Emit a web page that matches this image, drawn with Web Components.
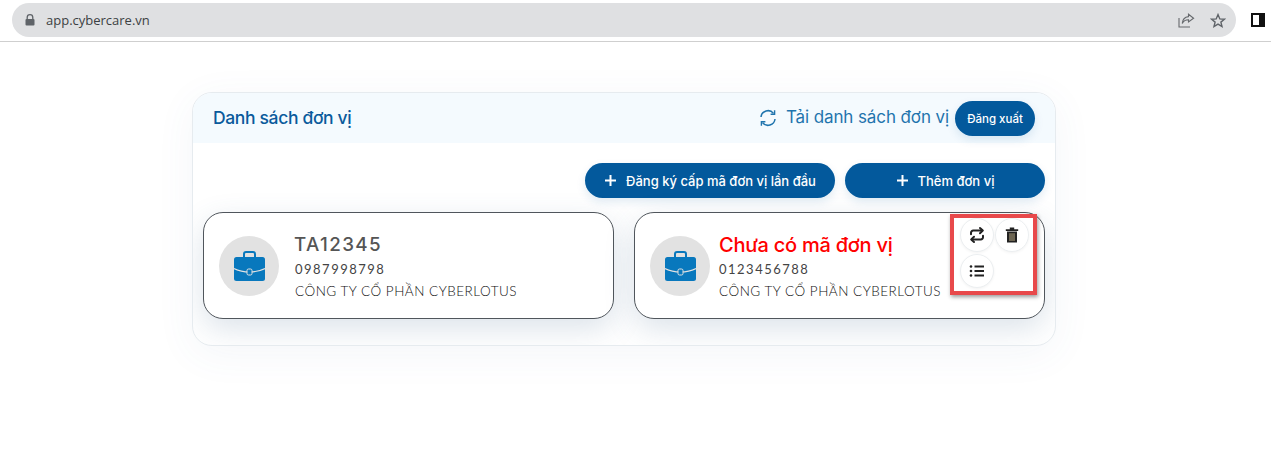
<!DOCTYPE html>
<html>
<head>
<meta charset="utf-8">
<title>Danh sách đơn vị</title>
<style>
  html, body { margin: 0; padding: 0; background: #fff; }
  body { font-family: "Inter", "Noto Sans", sans-serif; height: 472px; overflow: hidden; }
</style>
</head>
<body>
<browser-bar url="app.cybercare.vn"></browser-bar>
<unit-panel title="Danh sách đơn vị">
  <unit-card code="TA12345" phone="0987998798" company="CÔNG TY CỔ PHẦN CYBERLOTUS"></unit-card>
  <unit-card code="Chưa có mã đơn vị" phone="0123456788" company="CÔNG TY CỔ PHẦN CYBERLOTUS" missing actions></unit-card>
</unit-panel>

<script>
// browser chrome on top
class BrowserBar extends HTMLElement {
  constructor(){
    super();
    this.attachShadow({mode:"open"});
    this.shadowRoot.innerHTML = `
    <style>
      :host { display: flex; align-items: flex-start; height: 38px; padding: 3px 12px 0; border-bottom: 1px solid #cfcfcf; background: #fff; }
      .omni { flex: none; width: 1224px; height: 34px; background: #dfe0e2; border-radius: 17px; display: flex; align-items: center; padding: 0 0 0 13px; box-sizing: border-box; }
      .url { font: 400 13px "Open Sans", sans-serif; color: #3c4043; margin-left: 11px; flex: 1; }
      .omni svg { flex: none; display: block; }
      .share { margin-right: 15px; }
      .star { margin-right: 10px; }
      .side { flex: none; margin: 10px 0 0 15px; }
    </style>
    <div class="omni">
      <svg width="10" height="12" viewBox="0 0 10 12"><path d="M2.2 5V3.5a2.8 2.8 0 0 1 5.6 0V5" fill="none" stroke="#5f6368" stroke-width="1.3"/><rect x=".5" y="5" width="9" height="6.6" rx="1" fill="#5f6368"/></svg>
      <span class="url">${this.getAttribute("url")}</span>
      <svg class="share" width="17" height="15" viewBox="0 0 17 15" fill="none" stroke="#66696d" stroke-width="1.1"><path d="M1 5v9h11"/><path d="M10.5 1.2 15.6 5.2 10.5 9V6.8C7.5 6.8 5.5 8 4.2 10.6 4.5 6.8 6.8 4 10.5 3.6Z"/></svg>
      <svg class="star" width="16" height="15" viewBox="0 0 16 15" fill="none" stroke="#5f6368" stroke-width="1.4"><path d="M8 1.6 9.8 5.9 14.4 6.2 10.9 9.1 12 13.5 8 11.1 4 13.5 5.1 9.1 1.6 6.2 6.2 5.9Z"/></svg>
    </div>
    <svg class="side" width="14" height="14" viewBox="0 0 14 14"><rect x="1" y="1" width="12" height="12" fill="#fff" stroke="#111" stroke-width="2"/><rect x="8" y="1" width="5" height="12" fill="#111"/></svg>`;
  }
}

// pill button, with an optional plus
class PillButton extends HTMLElement {
  constructor(){
    super();
    this.attachShadow({mode:"open"});
    this.shadowRoot.innerHTML = `
    <style>
      :host { display: inline-flex; align-items: center; justify-content: center; gap: 10px; background: #03599c; color: #fff; border-radius: 18px; height: 35px; font: 500 13px "Inter", sans-serif; box-shadow: 0 4px 10px rgba(3,89,156,.12); box-sizing: border-box; }
      svg { display: block; margin-left: 1px; }
    </style>
    ${this.hasAttribute("plus") ? `<svg width="11" height="11" viewBox="0 0 11 11"><path d="M5.5 0v11M0 5.5h11" stroke="#fff" stroke-width="2"/></svg>` : ""}
    <slot></slot>`;
  }
}

class UnitPanel extends HTMLElement {
  constructor(){
    super();
    this.attachShadow({mode:"open"});
    this.shadowRoot.innerHTML = `
    <style>
      :host { display: block; width: 864px; height: 254px; margin: 50px 0 0 192px; box-sizing: border-box; border: 1px solid #e6ebef; border-radius: 20px; background: #fff; overflow: hidden; box-shadow: 0 8px 40px rgba(60,110,150,.06); }
      header { height: 50px; background: #f4fafe; display: flex; align-items: center; padding: 0 20px; }
      h1 { flex: 1; margin: 0; font: 500 17.5px "Inter", sans-serif; letter-spacing: -.35px; color: #0a5a9c; padding-bottom: 1px; }
      .reload { display: flex; align-items: center; gap: 9px; font: 400 17px "Inter", sans-serif; letter-spacing: -.1px; color: #1f74ad; padding-bottom: 2px; }
      .reload svg { display: block; margin-top: 1px; }
      .logout { width: 80px; height: 35px; margin-left: 6px; font-size: 11.5px; padding-top: 1px; }
      .actions { display: flex; justify-content: flex-end; gap: 10px; padding: 20px 10px 14px; }
      .first { width: 250px; }
      .add { width: 200px; }
      .grid { display: grid; grid-template-columns: 411px 411px; column-gap: 20px; padding: 0 10px; }
    </style>
    <header>
      <h1>${this.getAttribute("title")}</h1>
      <div class="reload">
        <svg width="18" height="18" viewBox="0 0 18 18" fill="none" stroke="#1f74ad" stroke-width="1.5"><path d="M2 8A7 7 0 0 1 14.5 4.4"/><path d="M16 10A7 7 0 0 1 3.5 13.6"/><path d="M15.6 1.2v4h-4" stroke-width="1.4"/><path d="M2.4 16.8v-4h4" stroke-width="1.4"/></svg>
        Tải danh sách đơn vị
      </div>
      <pill-button class="logout">Đăng xuất</pill-button>
    </header>
    <div class="actions">
      <pill-button class="first" plus>Đăng ký cấp mã đơn vị lần đầu</pill-button>
      <pill-button class="add" plus>Thêm đơn vị</pill-button>
    </div>
    <div class="grid"><slot></slot></div>`;
  }
}

// round icon button used on the card
class IconButton extends HTMLElement {
  constructor(){
    super();
    this.attachShadow({mode:"open"});
    const icons = {
      swap: `<path d="M3 8.2V6.8a2.2 2.2 0 0 1 2.2-2.2h9" fill="none" stroke="#222" stroke-width="2" stroke-linecap="round"/><path d="M12 2 14.8 4.6 12 7.2" fill="none" stroke="#222" stroke-width="2" stroke-linecap="round" stroke-linejoin="round"/><path d="M15 9.8v1.4a2.2 2.2 0 0 1-2.2 2.2h-9" fill="none" stroke="#222" stroke-width="2" stroke-linecap="round"/><path d="M6 10.8 3.2 13.4 6 16" fill="none" stroke="#222" stroke-width="2" stroke-linecap="round" stroke-linejoin="round"/>`,
      trash: `<path d="M2.8 3.2h12.4v1.7H2.8zM6.8 1.6h4.4v1.6H6.8z" fill="#222"/><path d="M4 5.6h10v11H4z" fill="#222"/><path d="M7 7.2v7.8M9 7.2v7.8M11 7.2v7.8" stroke="#c9b98f" stroke-width=".9"/>`,
      list: `<path d="M6.5 4.5h9.5M6.5 9h9.5M6.5 13.5h9.5" stroke="#222" stroke-width="1.8"/><circle cx="3" cy="4.5" r="1.3" fill="#222"/><circle cx="3" cy="9" r="1.3" fill="#222"/><circle cx="3" cy="13.5" r="1.3" fill="#222"/>`
    };
    this.shadowRoot.innerHTML = `
    <style>
      :host { display: flex; align-items: center; justify-content: center; width: 34px; height: 34px; border-radius: 50%; background: #fff; border: 1px solid #eceff1; box-sizing: border-box; box-shadow: 0 1px 3px rgba(0,0,0,.05); }
    </style>
    <svg width="18" height="18" viewBox="0 0 18 18">${icons[this.getAttribute("icon")]}</svg>`;
  }
}

class UnitCard extends HTMLElement {
  constructor(){
    super();
    this.attachShadow({mode:"open"});
    const missing = this.hasAttribute("missing");
    this.shadowRoot.innerHTML = `
    <style>
      :host { display: flex; position: relative; align-items: center; height: 107px; box-sizing: border-box; padding: 0 15px; background: #fff; border: 1px solid #50565c; border-radius: 20px; box-shadow: 0 10px 30px rgba(60,100,140,.18); }
      .avatar { flex: none; width: 60px; height: 60px; border-radius: 50%; background: #e2e2e2; display: flex; align-items: center; justify-content: center; }
      .info { margin-left: 16px; padding-top: 5px; }
      :host([actions]) .info { margin-left: 9px; }
      .code { font: 500 18.8px/24px "Inter", sans-serif; letter-spacing: 1.4px; color: #555; margin-top: -1px; margin-left: -1px; }
      .code.missing { font-size: 20px; letter-spacing: -.25px; color: #f00; margin-left: 0; }
      .phone { font: 400 13px/20px "Lato", sans-serif; letter-spacing: 1.5px; color: #444; margin-top: 2px; }
      .company { font: 300 13.5px/22px "Lato", sans-serif; letter-spacing: .5px; color: #111; margin-top: 1px; }
      .tools { position: absolute; top: 5px; right: 15px; width: 69px; display: flex; flex-wrap: wrap; gap: 2px 1px; }
      .mark { position: absolute; top: 1px; right: 7px; width: 87px; height: 81px; box-sizing: border-box; border: 4px solid #e8494b; box-shadow: 1px 2px 4px rgba(0,0,0,.4); pointer-events: none; }
    </style>
    <div class="avatar">
      <svg width="31" height="30" viewBox="0 0 31 30">
        <path d="M10 6V3a2 2 0 0 1 2-2h7a2 2 0 0 1 2 2v3" fill="none" stroke="#0878bd" stroke-width="2"/>
        <rect x="0" y="6" width="31" height="24" rx="2.5" fill="#0878bd"/>
        <path d="M0 17.5C5 20 10 21 15.5 21S26 20 31 17.5" fill="none" stroke="#e2e2e2" stroke-width="1.2"/>
        <rect x="13" y="18" width="5" height="6" rx="1.5" fill="#0878bd" stroke="#e2e2e2" stroke-width="1"/>
      </svg>
    </div>
    <div class="info">
      <div class="code${missing ? " missing" : ""}">${this.getAttribute("code")}</div>
      <div class="phone">${this.getAttribute("phone")}</div>
      <div class="company">${this.getAttribute("company")}</div>
    </div>
    ${this.hasAttribute("actions") ? `
    <div class="tools">
      <icon-button icon="swap"></icon-button>
      <icon-button icon="trash"></icon-button>
      <icon-button icon="list"></icon-button>
    </div>
    <div class="mark"></div>` : ""}`;
  }
}

customElements.define("browser-bar", BrowserBar);
customElements.define("pill-button", PillButton);
customElements.define("icon-button", IconButton);
customElements.define("unit-card", UnitCard);
customElements.define("unit-panel", UnitPanel);
</script>
</body>
</html>
